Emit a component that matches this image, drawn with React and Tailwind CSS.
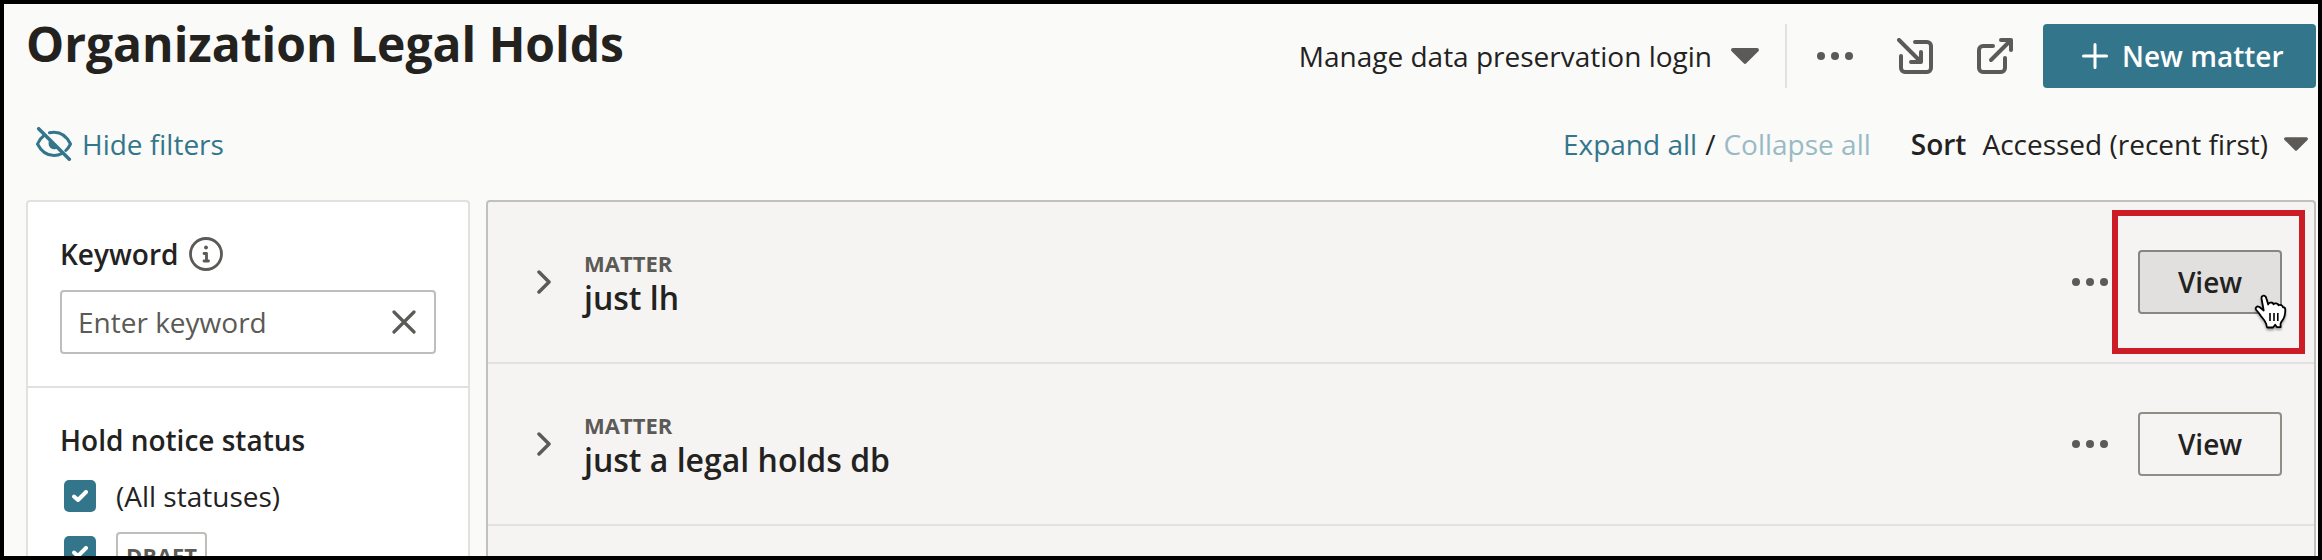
import React, { useState } from 'react';

const matters = [
  { id: 1, name: 'just lh', highlighted: true },
  { id: 2, name: 'just a legal holds db', highlighted: false },
];

const Caret = ({ className }) => (
  <svg className={className} viewBox="0 0 28 16" fill="currentColor">
    <path d="M2 0h24c1.8 0 2.6 2 1.4 3.2L15.300 15.300a1.900 1.900 0 0 1-2.600 0L.6 3.200C-.6 2 .2 0 2 0z" />
  </svg>
);

const Dots = () => (
  <svg className="h-2 w-9 shrink-0 text-[#5b5a56]" viewBox="0 0 36 8" fill="currentColor">
    <circle cx="4" cy="4" r="4" />
    <circle cx="18" cy="4" r="4" />
    <circle cx="32" cy="4" r="4" />
  </svg>
);

const ImportIcon = () => (
  <svg className="size-9" viewBox="0 0 36 36" fill="none" stroke="currentColor" strokeWidth="4" strokeLinecap="round" strokeLinejoin="round">
    <path d="M18 4h12a4 4 0 0 1 4 4v22a4 4 0 0 1-4 4H8a4 4 0 0 1-4-4V18" />
    <path d="M2 2l21 21M14 24h10V14" />
  </svg>
);

const ExternalIcon = () => (
  <svg className="size-9" viewBox="0 0 36 36" fill="none" stroke="currentColor" strokeWidth="4" strokeLinecap="round" strokeLinejoin="round">
    <path d="M16 8H6a4 4 0 0 0-4 4v18a4 4 0 0 0 4 4h18a4 4 0 0 0 4-4V20" />
    <path d="M14 22L33 3M24 2h10v10" />
  </svg>
);

const EyeOffIcon = () => (
  <svg className="h-[34px] w-9" viewBox="0 0 36 34" fill="none" stroke="currentColor" strokeWidth="3" strokeLinecap="round" strokeLinejoin="round">
    <path d="M13.500 5.800c1.500-.4 3-.6 4.500-.6 7 0 13 4.500 16.500 11.800-1.200 2.500-2.700 4.700-4.700 6.500" />
    <path d="M8 8.500C5.300 10.500 3 13.500 1.500 17 5 24 11 28.500 18 28.500c3 0 5.500-.7 8-2" />
    <path d="M13 13.500c-1.500 4.500 1 8.700 5 8.700 1.500 0 2.500-.3 3.500-1z" fill="currentColor" stroke="none" />
    <path d="M2.700 1.700l30.600 30.600" strokeWidth="3.500" />
  </svg>
);

const InfoIcon = () => (
  <svg className="size-[34px]" viewBox="0 0 34 34" fill="none" stroke="currentColor" strokeWidth="2.800">
    <circle cx="17" cy="17" r="15.500" />
    <circle cx="17" cy="10.500" r="1.900" fill="currentColor" stroke="none" />
    <path d="M15 16.500h2.500V24M15 24h4.500" strokeLinecap="round" strokeLinejoin="round" />
  </svg>
);

const HandCursor = () => (
  <svg className="absolute left-[115px] top-[43px] z-20 h-[38px] w-[34px] drop-shadow-[0_2px_1px_rgba(0,0,0,0.35)]" viewBox="0 0 34 38" fill="none">
    <path
      d="M12.500 29.500c-1-3-4-5-6-8.500-1-1.800-2.300-2.900-3.200-4C1.500 14.500 4 12.700 6.500 14l4.200 3.500L8.600 6C7.900 1.700 12.500 1.500 13.400 5.500l1.800 6c.3-2.600 4.600-2.600 5.300-.2.800-1.500 4.600-1.200 5 1 1.500-1 4.300 0 4.500 2 1.500-.2 2.400 1 2.300 2.700-.1 3.500-.6 7.300-2.300 9.500-1.300 1.700-2.300 3-2.500 4.500l.2 3.200H24l-1.800-2.400-2.200 2.700h-5.500c-1.300 0-.5-3-2-5z"
      fill="#fff"
      stroke="#000"
      strokeWidth="1.800"
      strokeLinejoin="round"
    />
    <path d="M17 20v8M21 20v8M24.800 20v8" stroke="#000" strokeWidth="1.600" />
  </svg>
);

const Checkbox = ({ checked, onChange, label }) => (
  <button
    type="button"
    role="checkbox"
    aria-checked={checked}
    aria-label={label}
    onClick={onChange}
    className="flex size-8 shrink-0 items-center justify-center rounded-[5px] bg-[#33768c]"
  >
    {checked && (
      <svg className="h-3 w-4" viewBox="0 0 16 12" fill="none" stroke="#fff" strokeWidth="4" strokeLinecap="round" strokeLinejoin="round">
        <path d="M2 6.500l4 3.500 8-8" />
      </svg>
    )}
  </button>
);

const MatterRow = ({ matter }) => (
  <div className="flex h-[162px] shrink-0 items-center border-b-2 border-[#e2e1df] pl-[49px] pr-8">
    <svg className="h-6 w-3.5 text-[#5b5a56]" viewBox="0 0 14 24" fill="none" stroke="currentColor" strokeWidth="3.500" strokeLinecap="round" strokeLinejoin="round">
      <path d="M2 2l10 10L2 22" />
    </svg>
    <div className="ml-[33px] flex-1 pt-0.5">
      <div className="text-[22px] leading-[30px] font-bold text-[#5b5a56]">MATTER</div>
      <div className="text-[32px] leading-[40px] font-semibold">{matter.name}</div>
    </div>
    <Dots />
    <div className="relative ml-[30px]">
      <button
        className={
          matter.highlighted
            ? 'h-16 w-36 rounded border-2 border-[#878683] bg-[#e1e0de] font-semibold'
            : 'h-16 w-36 rounded border-2 border-[#8f8e86] font-semibold'
        }
      >
        View
      </button>
      {matter.highlighted && (
        <>
          <div className="absolute -left-[26px] -top-10 z-10 h-36 w-[193px] border-6 border-[#cc1c26]" />
          <HandCursor />
        </>
      )}
    </div>
  </div>
);

const App = () => {
  const [keyword, setKeyword] = useState('');
  const [all, setAll] = useState(true);
  const [draft, setDraft] = useState(true);

  return (
    <div className="flex h-[560px] w-[2322px] flex-col overflow-hidden border-4 border-black bg-[#fafaf8] font-['Open_Sans',sans-serif] text-[28px] leading-[38px] text-[#23221f]">
      {/* Page header */}
      <header className="flex h-[104px] shrink-0 items-center justify-between pl-[22px] pr-0.5">
        <h1 className="mb-[25px] text-[48px] leading-[64px] font-bold">Organization Legal Holds</h1>
        <div className="flex items-center">
          <button className="flex items-center gap-[19px]">
            Manage data preservation login
            <Caret className="h-4 w-7 text-[#5b5a56]" />
          </button>
          <div className="ml-[26px] mr-[30px] h-16 w-0.5 bg-[#e2e1df]" />
          <Dots />
          <div className="ml-11 mr-[30px] flex gap-11 text-[#5b5a56]">
            <ImportIcon />
            <ExternalIcon />
          </div>
          <button className="flex h-16 w-[273px] items-center rounded bg-[#33768c] pl-[39px] font-semibold text-white">
            <svg className="mr-3.5 size-[26px]" viewBox="0 0 26 26" fill="none" stroke="currentColor" strokeWidth="3" strokeLinecap="round">
              <path d="M13 1.500v23M1.500 13h23" />
            </svg>
            New matter
          </button>
        </div>
      </header>

      <div className="flex h-[72px] shrink-0 items-center justify-between pl-8 pr-2.5">
        <button className="flex items-center gap-2.5 text-[#33768c]">
          <EyeOffIcon />
          Hide filters
        </button>
        <div className="flex items-center">
          <button className="text-[#33768c]">Expand all</button>
          <span className="mx-2">/</span>
          <button className="text-[#99bac5]">Collapse all</button>
          <span className="ml-10 font-semibold">Sort</span>
          <button className="ml-4 flex items-center gap-4">
            Accessed (recent first)
            <Caret className="h-3.5 w-6 text-[#5b5a56]" />
          </button>
        </div>
      </div>

      <main className="mt-5 flex min-h-0 flex-1 gap-4 pl-[22px] pr-0.5">
        {/* Filters */}
        <aside className="w-[444px] shrink-0 overflow-hidden rounded-t border-2 border-b-0 border-[#e2e1df] bg-white">
          <div className="h-[186px] border-b-2 border-[#e2e1df] px-8 pt-[33px]">
            <div className="flex items-center gap-[11px] font-semibold">
              Keyword
              <span className="text-[#5b5a56]">
                <InfoIcon />
              </span>
            </div>
            <div className="mt-[17px] flex h-16 items-center rounded border-2 border-[#bfbeba] pl-4 pr-[18px]">
              <input
                type="text"
                value={keyword}
                onChange={(e) => setKeyword(e.target.value)}
                placeholder="Enter keyword"
                className="min-w-0 flex-1 outline-none placeholder:text-[#5b5a56]"
              />
              <button aria-label="Clear" onClick={() => setKeyword('')} className="text-[#5b5a56]">
                <svg className="size-6" viewBox="0 0 24 24" fill="none" stroke="currentColor" strokeWidth="3.200" strokeLinecap="round">
                  <path d="M2 2l20 20M22 2L2 22" />
                </svg>
              </button>
            </div>
          </div>
          <div className="px-8 pt-[33px]">
            <div className="font-semibold">Hold notice status</div>
            <div className="mt-[18px] flex items-center gap-5 pl-1">
              <Checkbox checked={all} onChange={() => setAll(!all)} label="All statuses" />
              (All statuses)
            </div>
            <div className="mt-[17px] flex items-start gap-5 pl-1">
              <div className="mt-1">
                <Checkbox checked={draft} onChange={() => setDraft(!draft)} label="Draft" />
              </div>
              <span className="w-[91px] rounded border-2 border-[#bfbeba] py-1.5 text-center text-[22px] leading-[30px] font-bold text-[#5b5a56]">
                DRAFT
              </span>
            </div>
          </div>
        </aside>

        {/* Matter list */}
        <section className="flex-1 overflow-hidden rounded-t border-2 border-b-0 border-[#c1c0bd] bg-[#f5f4f2]">
          {matters.map((matter) => (
            <MatterRow key={matter.id} matter={matter} />
          ))}
        </section>
      </main>
    </div>
  );
};

export default App;
